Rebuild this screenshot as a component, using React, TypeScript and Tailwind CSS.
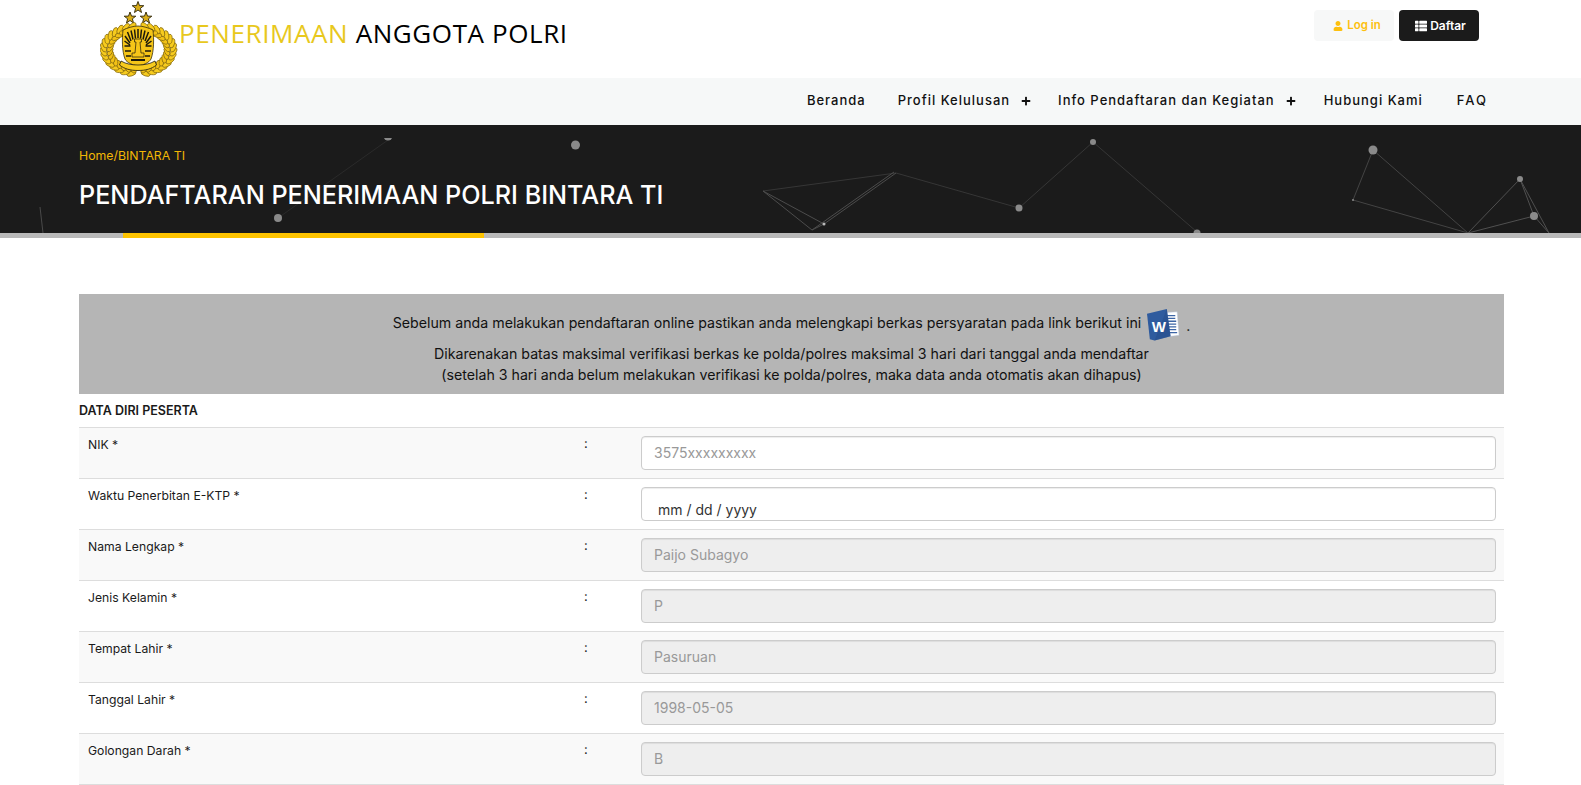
import { FaPlus, FaThList, FaUser } from "react-icons/fa";

const navItems = [
  { label: "Beranda", plus: false, cls: "mr-[32px]" },
  { label: "Profil Kelulusan", plus: true, cls: "mr-[27px]" },
  { label: "Info Pendaftaran dan Kegiatan", plus: true, cls: "mr-[28px]" },
  { label: "Hubungi Kami", plus: false, cls: "mr-[34px]" },
  { label: "FAQ", plus: false, cls: "tracking-[2px]" },
];

const rows = [
  { label: "NIK *", placeholder: "3575xxxxxxxxx" },
  { label: "Waktu Penerbitan E-KTP *", date: "mm / dd / yyyy" },
  { label: "Nama Lengkap *", value: "Paijo Subagyo" },
  { label: "Jenis Kelamin *", value: "P" },
  { label: "Tempat Lahir *", value: "Pasuruan" },
  { label: "Tanggal Lahir *", value: "1998-05-05" },
  { label: "Golongan Darah *", value: "B" },
];

const starPoints = "0,-6 1.5,-1.9 5.8,-1.8 2.4,0.8 3.5,5 0,2.5 -3.5,5 -2.4,0.8 -5.8,-1.8 -1.5,-1.9";

// leaves of the wreath, laid along an arc either side of the shield
const leaves = Array.from({ length: 16 }, (_, i) => 102 + i * 10.500);

function Wreath({ flip }: { flip?: boolean }) {
  return (
    <g transform={flip ? "translate(77 0) scale(-1 1)" : undefined}>
      {leaves.map((deg) => {
        const a = (deg * Math.PI) / 180;
        const x1 = 38.500 + 35 * Math.cos(a);
        const y1 = 49 + 24 * Math.sin(a);
        const x2 = 38.500 + 28.500 * Math.cos(a);
        const y2 = 49 + 20 * Math.sin(a);
        return (
          <g key={deg}>
            <ellipse cx={x1} cy={y1} rx="4.800" ry="2.500" transform={`rotate(${deg + 60} ${x1} ${y1})`} fill="#f7cb1e" stroke="#7d6410" strokeWidth="0.7" />
            <ellipse cx={x2} cy={y2} rx="4.400" ry="2.300" transform={`rotate(${deg + 120} ${x2} ${y2})`} fill="#f2c116" stroke="#7d6410" strokeWidth="0.7" />
          </g>
        );
      })}
    </g>
  );
}

function PolriLogo() {
  return (
    <svg width="78" height="76" viewBox="0 0 78 76" className="shrink-0">
      {[[38, 6.5], [30, 17], [46, 17]].map(([x, y]) => (
        <polygon key={`${x}-${y}`} transform={`translate(${x} ${y})`} points={starPoints} fill="#d9ad19" stroke="#2a2208" strokeWidth="0.9" />
      ))}
      <Wreath />
      <Wreath flip />
      {/* shield */}
      <path d="M38 25c5 0 11 2 15 4 1 9 1 21-2 29-2 4-8 6-13 7-5-1-11-3-13-7-3-8-3-20-2-29 4-2 10-4 15-4z" fill="#f5c518" stroke="#3a300a" strokeWidth="0.8" />
      <g stroke="#1d1a0c" strokeWidth="1.500">
        <path d="M38 28v9M34.500 28.500l1 9M41.500 28.500l-1 9M31 29.500l2 9M45 29.500l-2 9M27.500 31l3.500 9M48.500 31l-3.500 9M25 35l5 7M51 35l-5 7M24.500 40l5.500 4M51.500 40l-5.500 4M24.500 45h6M51.500 45h-6M25 50h6M51 50h-6M26 55h5M50 55h-5" />
      </g>
      <path d="M34.500 38h7v3h-1.500l1 11h3v4h-12v-4h3l1-11h-1.500z" fill="#f5c518" stroke="#1d1a0c" strokeWidth="0.7" />
      <path d="M31 58h14v2H31z" fill="#1d1a0c" />
      <path d="M21 60c5 3 11 4 17 4s12-1 17-4l1.500 4c-5 4-11 5.500-18.500 5.500S24.500 68 19.500 64z" fill="#f7cb1e" stroke="#1d1a0c" strokeWidth="0.8" />
    </svg>
  );
}

function WordIcon() {
  return (
    <svg width="33" height="34" viewBox="0 0 35 34" className="mx-[6px] inline-block shrink-0">
      <path d="M15 4l17-1 2 25-17 2z" fill="#fff" stroke="#b7c4da" strokeWidth="0.5" />
      <path d="M21 7h9M21 10h9M21 13h10M21 16h10M21 19h10M21 22h10M21 25h11" stroke="#3d66a6" strokeWidth="1.400" />
      <path d="M0 5L21 0l4 29-17 4.500L3 32z" fill="#2f5b9e" />
      <path d="M21 0l4 29-17 4.500z" fill="#264c88" opacity="0.5" />
      <text x="5" y="24" fontSize="16" fontWeight="700" fill="#fff" fontFamily="'Liberation Sans', sans-serif">W</text>
    </svg>
  );
}

function BannerLines() {
  return (
    <svg className="absolute inset-0 h-[108px] w-full" viewBox="0 0 1581 108" preserveAspectRatio="none">
      <g transform="translate(0 -125)" fill="none" strokeWidth="1">
        <path d="M388 140L278 218" stroke="#2a2a2a" />
        <path d="M40 207l3 26" stroke="#4a4a4a" />
        <path d="M763 191L896 173L1019 208L1093 142L1197 232" stroke="#363636" />
        <path d="M763 191L812 230L824 224L763 191M896 173L824 224M894 172L812 230" stroke="#4c4c4c" />
        <path d="M1373 150L1353 200L1468 233L1373 150" stroke="#444" />
        <path d="M1468 233L1520 179L1549 233M1468 233L1534 216L1549 233M1520 179L1534 216" stroke="#505050" />
      </g>
      <g transform="translate(0 -125)" fill="#8a8a8a">
        <circle cx="388" cy="136" r="4.500" />
        <circle cx="575.500" cy="145" r="4.500" />
        <circle cx="278" cy="218" r="4" />
        <circle cx="824" cy="224" r="1.500" fill="#bbb" />
        <circle cx="1019" cy="208" r="3.500" />
        <circle cx="1093" cy="142" r="3" />
        <circle cx="1197" cy="233" r="3.500" />
        <circle cx="1373" cy="150" r="4.500" />
        <circle cx="1353" cy="200" r="1" />
        <circle cx="1520" cy="179" r="3" />
        <circle cx="1534" cy="216" r="4" />
      </g>
      <rect x="0" y="0" width="1581" height="13" fill="#1b1b1b" />
    </svg>
  );
}

export default function App() {
  return (
    <div className="h-screen overflow-hidden bg-white font-['Inter',sans-serif] text-[#1a1a1a]">
      <header className="flex h-[78px] justify-between pl-[100px] pr-[102px]">
        <div className="flex items-start">
          <div className="pt-[1px]">
            <PolriLogo />
          </div>
          <div className="ml-[1px] whitespace-nowrap pt-[16px] font-['Open_Sans',sans-serif] text-[26px] leading-[34px] tracking-[0.6px]">
            <span className="text-[#e8c81d]">PENERIMAAN</span> <span className="text-black">ANGGOTA POLRI</span>
          </div>
        </div>
        <div className="flex gap-[5px] pt-[10px]">
          <a href="#" className="flex h-[31px] w-[80px] items-center justify-center gap-[4px] rounded-[4px] bg-[#f7f8f8] pl-[6px] text-[11.500px] font-semibold text-[#fdc00f]">
            <FaUser className="text-[10px]" />
            Log in
          </a>
          <a href="#" className="flex h-[31px] w-[80px] items-center justify-center gap-[3px] rounded-[4px] bg-[#1b1b1b] pl-[3px] text-[12px] font-semibold text-white">
            <FaThList className="text-[12px]" />
            Daftar
          </a>
        </div>
      </header>

      <nav className="flex h-[47px] items-center justify-end bg-[#f6f8f8] pb-[2px] pr-[93px] text-[13px] font-medium tracking-[1px] text-[#111]">
        {navItems.map((item) => (
          <a key={item.label} href="#" className={`flex items-center ${item.cls}`}>
            {item.label}
            {item.plus && <FaPlus className="ml-[11px] text-[10px]" />}
          </a>
        ))}
      </nav>

      <section className="relative h-[113px] overflow-hidden bg-[#1b1b1b]">
        <BannerLines />
        <div className="relative pl-[79px] pt-[22px]">
          <p className="text-[12.300px] leading-[18px] text-[#f2b705]">Home/BINTARA TI</p>
          <h1 className="mt-[15px] text-[25.200px] font-medium leading-[30px] text-white">
            PENDAFTARAN PENERIMAAN POLRI BINTARA TI
          </h1>
        </div>
        <div className="absolute bottom-0 left-0 h-[5px] w-full bg-[#b9b9b9]">
          <div className="ml-[123px] h-full w-[361px] bg-[#fdc300]" />
        </div>
      </section>

      <main className="ml-[79px] mr-[77px] pt-[56px]">
        <div className="bg-[#b5b5b5] pb-[9px] pt-[14px] text-center text-[14.200px] leading-[21px] text-[#111]">
          <p className="mb-[1px] flex items-center justify-center">
            <span className="pb-[5px]">Sebelum anda melakukan pendaftaran online pastikan anda melengkapi berkas persyaratan pada link berikut ini</span>
            <WordIcon />.
          </p>
          <p>Dikarenakan batas maksimal verifikasi berkas ke polda/polres maksimal 3 hari dari tanggal anda mendaftar</p>
          <p>(setelah 3 hari anda belum melakukan verifikasi ke polda/polres, maka data anda otomatis akan dihapus)</p>
        </div>

        <div className="flex h-[34px] items-center border-b border-[#ddd] pt-[2px] text-[12.500px] font-semibold">DATA DIRI PESERTA</div>

        {rows.map((row, i) => (
          <div
            key={row.label}
            className={`grid h-[51px] grid-cols-[499px_55px_1fr] border-b border-[#ddd] ${i % 2 === 0 ? "bg-[#f9f9f9]" : "bg-white"}`}
          >
            <label className="pl-[9px] pt-[7px] text-[12.200px] leading-[20px]">{row.label}</label>
            <span className="pl-[6px] pt-[5px] text-[13px] leading-[20px] text-[#222]">:</span>
            <div className="px-[8px] pt-[8px]">
              {row.date ? (
                <input
                  readOnly
                  value={row.date}
                  className="h-[34px] w-full rounded-[4px] border border-[#ccc] bg-white px-[16px] pt-[10px] text-[14px] leading-[20px] text-[#333] shadow-[inset_0_1px_1px_rgba(0,0,0,0.075)] outline-none"
                />
              ) : (
                <input
                  disabled={row.value !== undefined}
                  placeholder={row.placeholder}
                  value={row.value}
                  readOnly
                  className="h-[34px] w-full rounded-[4px] border border-[#ccc] bg-white px-[12px] pb-[2px] text-[14px] text-[#999] opacity-100 shadow-[inset_0_1px_1px_rgba(0,0,0,0.075)] outline-none placeholder:text-[#999] disabled:bg-[#eee]"
                />
              )}
            </div>
          </div>
        ))}
      </main>
    </div>
  );
}
